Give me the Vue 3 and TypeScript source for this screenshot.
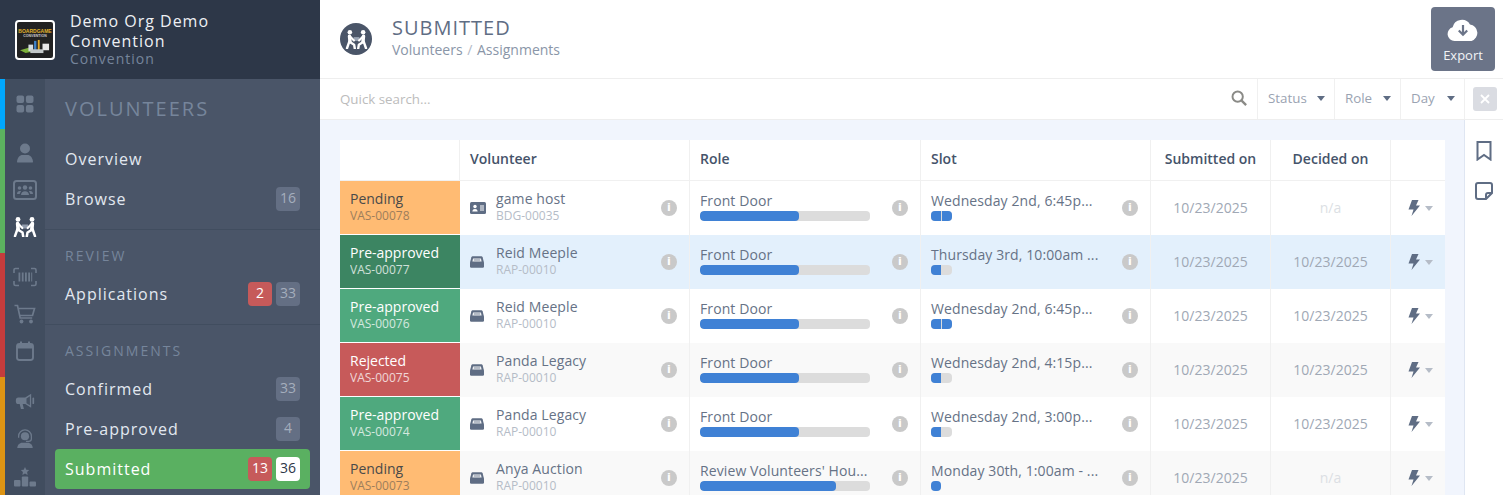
<script setup lang="ts">
type Row = {
  status: string;
  tone: string;
  code: string;
  name: string;
  sub: string;
  kind: "badge" | "inbox";
  role: string;
  rolePct: number;
  slot: string;
  slotParts: number;
  decided: string;
  highlight?: boolean;
  shaded?: boolean;
};

const rows: Row[] = [
  { status: "Pending", tone: "pending", code: "VAS-00078", name: "game host", sub: "BDG-00035", kind: "badge", role: "Front Door", rolePct: 58, slot: "Wednesday 2nd, 6:45p...", slotParts: 2, decided: "n/a" },
  { status: "Pre-approved", tone: "approved-dark", code: "VAS-00077", name: "Reid Meeple", sub: "RAP-00010", kind: "inbox", role: "Front Door", rolePct: 58, slot: "Thursday 3rd, 10:00am ...", slotParts: 1, decided: "10/23/2025", highlight: true },
  { status: "Pre-approved", tone: "approved", code: "VAS-00076", name: "Reid Meeple", sub: "RAP-00010", kind: "inbox", role: "Front Door", rolePct: 58, slot: "Wednesday 2nd, 6:45p...", slotParts: 2, decided: "10/23/2025" },
  { status: "Rejected", tone: "rejected", code: "VAS-00075", name: "Panda Legacy", sub: "RAP-00010", kind: "inbox", role: "Front Door", rolePct: 58, slot: "Wednesday 2nd, 4:15p...", slotParts: 1, decided: "10/23/2025", shaded: true },
  { status: "Pre-approved", tone: "approved", code: "VAS-00074", name: "Panda Legacy", sub: "RAP-00010", kind: "inbox", role: "Front Door", rolePct: 58, slot: "Wednesday 2nd, 3:00p...", slotParts: 1, decided: "10/23/2025" },
  { status: "Pending", tone: "pending", code: "VAS-00073", name: "Anya Auction", sub: "RAP-00010", kind: "inbox", role: "Review Volunteers' Hou...", rolePct: 80, slot: "Monday 30th, 1:00am - ...", slotParts: 0, decided: "n/a", shaded: true },
];

const filters = ["Status", "Role", "Day"];
</script>

<template>
  <div class="page">
    <aside class="sidebar">
      <div class="brand">
        <div class="logo">
          <div class="logo-inner">
            <span class="logo-top">BOARDGAME</span>
            <span class="logo-sub">CONVENTION</span>
            <svg viewBox="0 0 34 16" class="logo-art">
              <path d="M1 12l10-3 5 4-9 2z" fill="#7fb33c" />
              <rect x="10" y="6" width="5" height="7" fill="#d5dde0" />
              <rect x="16" y="2" width="2.500" height="10" fill="#3e83c9" />
              <rect x="20" y="1" width="2" height="11" fill="#e0a92c" />
              <rect x="25" y="5" width="7" height="7" fill="#e8e8e8" />
              <rect x="12" y="11" width="14" height="4" fill="#c4c9c9" />
            </svg>
          </div>
        </div>
        <div class="brand-text">
          <div class="brand-name">Demo Org Demo Convention</div>
          <div class="brand-type">Convention</div>
        </div>
      </div>

      <div class="side-body">
        <nav class="rail">
          <div class="rail-group blue">
            <svg class="ri" viewBox="0 0 20 20"><rect x="1.500" y="1.500" width="7.600" height="7.600" rx="2" /><rect x="10.900" y="1.500" width="7.600" height="7.600" rx="2" /><rect x="1.500" y="10.900" width="7.600" height="7.600" rx="2" /><rect x="10.900" y="10.900" width="7.600" height="7.600" rx="2" /></svg>
          </div>
          <div class="rail-group green">
            <svg class="ri" viewBox="0 0 20 20"><circle cx="10" cy="5.500" r="5" /><path d="M2.500 19.500c-.4 0-.5-.3-.5-.8C2.400 14.500 4.800 12 7.500 12h5c2.700 0 5.100 2.500 5.500 6.700 0 .5-.1.8-.5.8z" /></svg>
            <svg class="ri wide" viewBox="0 0 24 20"><rect x="1" y="1" width="22" height="18" rx="2.500" fill="none" stroke="#6d7a8c" stroke-width="2" /><circle cx="12" cy="7.500" r="2.200" /><circle cx="6.500" cy="8" r="1.800" /><circle cx="17.500" cy="8" r="1.800" /><path d="M8 15c0-2.200 1.800-3.700 4-3.700s4 1.500 4 3.700zM4 14c0-1.800 1.100-3 2.600-3 .6 0 1.100.1 1.500.4-.8.700-1.300 1.500-1.400 2.600zM20 14c0-1.800-1.100-3-2.600-3-.6 0-1.100.1-1.500.4.8.7 1.300 1.500 1.400 2.600z" /></svg>
            <svg class="ri wide carry" viewBox="0 0 24 20"><rect x="9" y="7.500" width="6" height="4" fill="#8f9aab" stroke="none" /><circle cx="5" cy="2.400" r="2.400" stroke="none" /><circle cx="19" cy="2.400" r="2.400" stroke="none" /><path d="M4.600 6.500 5.200 12.500" stroke-width="3.600" /><path d="M5 6.500 9.300 11" stroke-width="2.200" /><path d="M4.500 12 2 19.200M5.500 13 9.500 15.500 10.200 19.500" stroke-width="2.500" /><path d="M19.400 6.500 18.800 12.500" stroke-width="3.600" /><path d="M19 6.500 14.700 11" stroke-width="2.200" /><path d="M19.500 12 22 19.200M18.500 13 14.500 15.500 13.800 19.500" stroke-width="2.500" /></svg>
          </div>
          <div class="rail-group red">
            <svg class="ri wide" viewBox="0 0 24 20"><path d="M1 6V3a1.500 1.500 0 0 1 1.500-1.500H6M18 1.500h3.500A1.500 1.500 0 0 1 23 3v3M23 14v3a1.500 1.500 0 0 1-1.500 1.500H18M6 18.500H2.500A1.500 1.500 0 0 1 1 17v-3" fill="none" stroke="#6d7a8c" stroke-width="1.600" /><rect x="5.500" y="5.500" width="1.800" height="9" /><rect x="8.800" y="5.500" width="1.800" height="9" /><rect x="12" y="5.500" width="1.800" height="9" /><rect x="15.200" y="5.500" width="1.800" height="9" /><rect x="18.200" y="5.500" width="1" height="9" /></svg>
            <svg class="ri wide" viewBox="0 0 24 20"><path d="M1.500 1.500h3l2.700 12.500h12" fill="none" stroke="#6d7a8c" stroke-width="1.700" /><path d="M5.500 4.500h16l-2 7H7" fill="none" stroke="#6d7a8c" stroke-width="1.700" /><circle cx="8.500" cy="17.500" r="1.900" /><circle cx="18" cy="17.500" r="1.900" /></svg>
            <svg class="ri" viewBox="0 0 20 20"><rect x="2" y="3" width="16" height="16" rx="2.500" fill="none" stroke="#6d7a8c" stroke-width="1.900" /><rect x="2" y="3" width="16" height="4.500" /><rect x="5" y="0.500" width="2" height="4" /><rect x="13" y="0.500" width="2" height="4" /></svg>
          </div>
          <div class="rail-group orange">
            <svg class="ri" viewBox="0 0 23.500 20"><path d="M19 1.500 12 6H4a3 3 0 0 0-3 3v1.500a3 3 0 0 0 3 3h1.500L7 19.500h3.500l-1.500-6h3l7 4.500z" /><path d="M17.500 4.500v10.500l-4-2.500V7z" fill="#465264" /><rect x="20.500" y="6" width="2" height="7.500" rx="1" /></svg>
            <svg class="ri wide" viewBox="0 0 24 22"><circle cx="12" cy="8" r="4.500" /><path d="M5 9.500V8a7 7 0 0 1 14 0v3c0 1.500-1.200 2.500-3 2.500h-3" fill="none" stroke="#6d7a8c" stroke-width="1.400" /><path d="M3.500 21c0-3.500 2.500-6 5.500-6h6c3 0 5.500 2.500 5.500 6z" /></svg>
            <svg class="ri wide" viewBox="0 0 24 20"><path d="m12 0 1.300 2.700 2.900.4-2.100 2 .5 2.900-2.600-1.400-2.600 1.400.5-2.900-2.100-2 2.900-.4z" /><rect x="1" y="13" width="6.500" height="6.500" rx="1" /><rect x="8.800" y="9.500" width="6.400" height="10" rx="1" /><rect x="16.500" y="14.500" width="6.500" height="5" rx="1" /></svg>
          </div>
        </nav>

        <div class="menu">
          <h2 class="menu-title">VOLUNTEERS</h2>
          <section class="menu-block first">
            <a class="item">Overview</a>
            <a class="item">Browse<span class="counts"><b class="count">16</b></span></a>
          </section>
          <section class="menu-block">
            <h3 class="menu-head">REVIEW</h3>
            <a class="item">Applications<span class="counts"><b class="count red">2</b><b class="count">33</b></span></a>
          </section>
          <section class="menu-block last">
            <h3 class="menu-head">ASSIGNMENTS</h3>
            <a class="item">Confirmed<span class="counts"><b class="count">33</b></span></a>
            <a class="item">Pre-approved<span class="counts"><b class="count">4</b></span></a>
            <a class="item current">Submitted<span class="counts"><b class="count red">13</b><b class="count white">36</b></span></a>
          </section>
        </div>
      </div>
    </aside>

    <main class="main">
      <header class="top">
        <div class="round-icon">
          <svg class="carry" viewBox="0 0 24 20" width="23" height="19"><rect x="9" y="7.500" width="6" height="4" fill="#9aa5b5" stroke="none" /><circle cx="5" cy="2.400" r="2.400" stroke="none" /><circle cx="19" cy="2.400" r="2.400" stroke="none" /><path d="M4.600 6.500 5.200 12.500" stroke-width="3.600" /><path d="M5 6.500 9.300 11" stroke-width="2.200" /><path d="M4.500 12 2 19.200M5.500 13 9.500 15.500 10.200 19.500" stroke-width="2.500" /><path d="M19.400 6.500 18.800 12.500" stroke-width="3.600" /><path d="M19 6.500 14.700 11" stroke-width="2.200" /><path d="M19.500 12 22 19.200M18.500 13 14.500 15.500 13.800 19.500" stroke-width="2.500" /></svg>
        </div>
        <div class="top-text">
          <h1>SUBMITTED</h1>
          <div class="crumbs">Volunteers <i>/</i> Assignments</div>
        </div>
        <button class="export" type="button">
          <svg viewBox="0 0 32 24" width="32" height="24"><path fill="#fff" d="M7.500 23A7 7 0 0 1 5.600 9.300 9.500 9.500 0 0 1 23 6.500 8.500 8.500 0 0 1 24.500 23z" /><path d="M16 7v9M11.800 12.500 16 16.700l4.200-4.200" fill="none" stroke="#6b7488" stroke-width="2.200" /></svg>
          <span>Export</span>
        </button>
      </header>

      <div class="searchbar">
        <span class="placeholder">Quick search...</span>
        <svg class="search-icon" viewBox="0 0 18 18" width="16" height="16"><circle cx="7.500" cy="7.500" r="5.800" fill="none" stroke="#8a8a86" stroke-width="2.200" /><path d="m12 12 5 5" stroke="#8a8a86" stroke-width="2.600" /></svg>
        <div v-for="f in filters" :key="f" class="filter" :class="'f-' + f.toLowerCase()">{{ f }}<i class="caret"></i></div>
        <div class="clear-wrap">
          <span class="clear">
            <svg viewBox="0 0 10 10" width="10" height="10"><path d="m1 1 8 8M9 1 1 9" stroke="#fff" stroke-width="1.800" /></svg>
          </span>
        </div>
      </div>

      <div class="body">
        <div class="content">
          <div class="table">
            <div class="tr head">
              <div class="td"></div>
              <div class="td">Volunteer</div>
              <div class="td">Role</div>
              <div class="td">Slot</div>
              <div class="td center">Submitted on</div>
              <div class="td center">Decided on</div>
              <div class="td"></div>
            </div>
            <div v-for="r in rows" :key="r.code" class="tr row" :class="{ highlight: r.highlight, shaded: r.shaded }">
              <div class="td status" :class="r.tone">
                <div class="st-name">{{ r.status }}</div>
                <div class="st-code">{{ r.code }}</div>
              </div>
              <div class="td vol">
                <svg v-if="r.kind === 'badge'" class="kind" viewBox="0 0 16 12" width="16" height="12"><rect width="16" height="12" rx="1.500" fill="#5f6d84" /><circle cx="5" cy="4.500" r="1.700" fill="#fff" /><path d="M2.300 9.500C2.500 7.800 3.600 7 5 7s2.500.8 2.700 2.500z" fill="#fff" /><path d="M10 4h4M10 6h4M10 8h4" stroke="#fff" stroke-width="1" /></svg>
                <svg v-else class="kind inbox" viewBox="0 0 16 13" width="14" height="12"><path d="M3 0h10a1.500 1.500 0 0 1 1.400 1L16 7v4.500a1.500 1.500 0 0 1-1.500 1.500h-13A1.500 1.500 0 0 1 0 11.500V7l1.600-6A1.500 1.500 0 0 1 3 0z" fill="#5f6d84" /><path d="M3.500 2.500h9l.8 3.500H2.700z" fill="#fff" opacity=".9" /><path d="M4.500 4.200h7" stroke="#5f6d84" stroke-width=".9" /></svg>
                <div class="two name-block">
                  <div class="main-line">{{ r.name }}</div>
                  <div class="sub-line">{{ r.sub }}</div>
                </div>
                <i class="info">i</i>
              </div>
              <div class="td barcell">
                <div class="two bar-block">
                  <div class="main-line">{{ r.role }}</div>
                  <div class="bar role-bar"><span :style="{ width: r.rolePct + '%' }"></span></div>
                </div>
                <i class="info">i</i>
              </div>
              <div class="td barcell">
                <div class="two bar-block">
                  <div class="main-line">{{ r.slot }}</div>
                  <div class="bar slot-bar" :class="r.slotParts === 0 ? 'tiny' : ''">
                    <span v-for="n in Math.max(r.slotParts, 1)" :key="n" class="seg"></span>
                  </div>
                </div>
                <i class="info">i</i>
              </div>
              <div class="td center date">10/23/2025</div>
              <div class="td center date" :class="{ na: r.decided === 'n/a' }">{{ r.decided }}</div>
              <div class="td center action">
                <svg viewBox="0 0 12 16" width="12" height="16"><path d="M4 0h6.500L8 5.500h4L3.500 16l2-6.500H.5z" fill="#5f6d84" /></svg>
                <i class="caret small"></i>
              </div>
            </div>
          </div>
        </div>
        <aside class="tools">
          <svg viewBox="0 0 16 20" width="16" height="20"><path d="M1.500 1h13v17.500L8 14l-6.500 4.500z" fill="none" stroke="#5f6d84" stroke-width="2" /></svg>
          <svg viewBox="0 0 18 18" width="18" height="18"><path d="M3 1h12a2 2 0 0 1 2 2v8l-6 6H3a2 2 0 0 1-2-2V3a2 2 0 0 1 2-2z" fill="none" stroke="#5f6d84" stroke-width="2" /><path d="M11 17v-4a2 2 0 0 1 2-2h4" fill="none" stroke="#5f6d84" stroke-width="2" /></svg>
        </aside>
      </div>
    </main>
  </div>
</template>

<style>
html,
body {
  margin: 0;
  height: 495px;
  overflow: hidden;
  background: #fff;
}
</style>

<style scoped>
.page {
  display: flex;
  width: 1503px;
  height: 495px;
  overflow: hidden;
  font-family: "Open Sans", sans-serif;
  color: #5f6d84;
}

/* sidebar */
.sidebar {
  width: 320px;
  flex: none;
  display: flex;
  flex-direction: column;
  background: #4a5568;
}
.brand {
  height: 79px;
  flex: none;
  box-sizing: border-box;
  background: #2d3748;
  display: flex;
  align-items: center;
  padding-left: 15px;
  gap: 15px;
}
.logo {
  width: 40px;
  height: 40px;
  box-sizing: border-box;
  border: 2px solid #fff;
  border-radius: 4px;
  background: #222;
  overflow: hidden;
  flex: none;
}
.logo-inner {
  display: flex;
  flex-direction: column;
  align-items: center;
  padding-top: 7px;
}
.logo-top {
  font: 700 5px/5px "Liberation Sans", sans-serif;
  color: #e0b22d;
  white-space: nowrap;
}
.logo-sub {
  font: 700 3.5px/4px "Liberation Sans", sans-serif;
  color: #ccc;
  white-space: nowrap;
}
.logo-art {
  width: 32px;
  height: 15px;
  margin-top: 1px;
  flex: none;
}
.brand-text {
  width: 165px;
  letter-spacing: 1px;
  margin-top: -2px;
}
.brand-name {
  color: #edf0f4;
  font-size: 16px;
  line-height: 20px;
}
.brand-type {
  color: #76859b;
  font-size: 14px;
  line-height: 16px;
}
.side-body {
  flex: 1;
  display: flex;
  min-height: 0;
}
.rail {
  width: 45px;
  flex: none;
  background: #414d5f;
  display: flex;
  flex-direction: column;
}
.rail-group {
  border-left: 5px solid;
  display: flex;
  flex-direction: column;
  align-items: center;
  box-sizing: border-box;
}
.rail-group.blue {
  border-color: #00a8ff;
  height: 50px;
  padding-top: 15px;
}
.rail-group.green {
  border-color: #5cb25f;
  height: 124px;
  padding-top: 14px;
  gap: 17px;
}
.rail-group.red {
  border-color: #c53c3c;
  height: 124px;
  padding-top: 14px;
  gap: 17px;
}
.rail-group.orange {
  border-color: #dd9414;
  flex: 1;
  padding-top: 14px;
  gap: 18px;
}
.ri {
  width: 20px;
  height: 20px;
  fill: #6d7a8c;
  flex: none;
}
.ri.wide {
  width: 24px;
}
.carry {
  fill: #fff;
  stroke: #fff;
  stroke-linecap: round;
  stroke-linejoin: round;
}
.carry path {
  fill: none;
}
.menu {
  flex: 1;
  min-width: 0;
}
.menu-title {
  margin: 0;
  padding: 15px 0 0 20px;
  height: 45px;
  box-sizing: border-box;
  font-size: 20px;
  line-height: 30px;
  font-weight: 400;
  letter-spacing: 2px;
  color: #76859b;
}
.menu-block {
  border-bottom: 1px solid #414d5f;
  padding: 0 10px 10px;
}
.menu-block.first {
  padding-top: 15px;
}
.menu-block.last {
  border-bottom: 0;
}
.menu-head {
  margin: 0;
  padding: 16px 0 0 10px;
  height: 44px;
  box-sizing: border-box;
  font-size: 14px;
  line-height: 20px;
  font-weight: 400;
  letter-spacing: 2px;
  color: #76859b;
}
.item {
  height: 40px;
  box-sizing: border-box;
  display: flex;
  align-items: center;
  justify-content: space-between;
  padding: 0 10px;
  font-size: 16px;
  letter-spacing: 1px;
  color: #e2e8f0;
  border-radius: 4px;
}
.item.current {
  background: #5ab061;
  color: #fff;
}
.counts {
  display: flex;
  gap: 4px;
}
.count {
  width: 24px;
  height: 24px;
  border-radius: 4px;
  background: #646f84;
  color: #a4aebd;
  font-size: 14px;
  font-weight: 400;
  letter-spacing: 0;
  line-height: 22px;
  text-align: center;
}
.count.red {
  background: #c65a5a;
  color: #fff;
}
.count.white {
  background: #fff;
  color: #2d3748;
}

/* main */
.main {
  flex: 1;
  min-width: 0;
  display: flex;
  flex-direction: column;
}
.top {
  height: 79px;
  flex: none;
  box-sizing: border-box;
  border-bottom: 1px solid #eeeeee;
  display: flex;
  align-items: center;
  padding: 0 8px 3px 20px;
}
.round-icon {
  width: 32px;
  height: 32px;
  border-radius: 50%;
  background: #4a5568;
  display: flex;
  align-items: center;
  justify-content: center;
  margin-right: 20px;
  margin-top: 3px;
}
.top-text {
  flex: 1;
}
.top-text h1 {
  margin: 0;
  font-size: 20px;
  line-height: 24px;
  font-weight: 400;
  letter-spacing: 1px;
  color: #5f6d84;
}
.crumbs {
  font-size: 14px;
  line-height: 20px;
  color: #8a96a8;
}
.crumbs i {
  font-style: normal;
  color: #b3bac6;
  margin: 0 1px;
}
.export {
  align-self: flex-start;
  width: 64px;
  height: 64px;
  padding: 11px 0 0;
  margin-top: 7px;
  border: 0;
  border-radius: 4px;
  background: #6b7488;
  color: #f1f3f6;
  font-family: inherit;
  font-size: 13px;
  line-height: 18px;
  display: flex;
  flex-direction: column;
  align-items: center;
  gap: 4px;
}
.searchbar {
  height: 41px;
  flex: none;
  box-sizing: border-box;
  border-bottom: 1px solid #eeeeee;
  display: flex;
  align-items: center;
  font-size: 13.33px;
}
.placeholder {
  flex: 1;
  padding: 0 0 1px 20px;
  color: #bcbcbc;
}
.search-icon {
  margin: 0 10px 2px 0;
}
.filter {
  height: 40px;
  box-sizing: border-box;
  border-left: 1px solid #f0f0f0;
  display: flex;
  align-items: center;
  padding: 0 0 2px 10px;
  color: #9aa3b2;
}
.f-status {
  width: 77px;
}
.f-role {
  width: 66px;
}
.f-day {
  width: 64px;
}
.caret {
  display: block;
  width: 0;
  height: 0;
  border-left: 4.5px solid transparent;
  border-right: 4.5px solid transparent;
  border-top: 5px solid #5f6d84;
  margin-left: auto;
  margin-right: 9px;
}
.clear-wrap {
  width: 39px;
  height: 40px;
  box-sizing: border-box;
  border-left: 1px solid #f0f0f0;
  display: flex;
  align-items: center;
  padding-left: 8px;
}
.clear {
  width: 24px;
  height: 24px;
  border-radius: 3px;
  background: #dadce2;
  display: flex;
  align-items: center;
  justify-content: center;
}
.body {
  flex: 1;
  min-height: 0;
  display: flex;
}
.content {
  width: 1144px;
  flex: none;
  box-sizing: border-box;
  background: #f1f5fd;
  padding: 20px 19px 0 20px;
  overflow: hidden;
}
.tools {
  flex: 1;
  border-left: 1px solid #dfe6f2;
  display: flex;
  flex-direction: column;
  align-items: center;
  gap: 21px;
  padding-top: 21px;
}

/* table */
.table {
  width: 1105px;
  background: #fff;
}
.tr {
  display: grid;
  grid-template-columns: 120px 230px 231px 230px 120px 120px 54px;
}
.td {
  box-sizing: border-box;
  border-right: 1px solid #f0f0f0;
  display: flex;
  align-items: center;
  min-width: 0;
  font-size: 14px;
}
.td:last-child {
  border-right: 0;
}
.head {
  height: 41px;
  box-sizing: border-box;
  border-bottom: 1px solid #f0f0f0;
}
.head .td {
  padding: 0 10px 3px;
  color: #45536a;
  font-weight: 600;
}
.td.center {
  justify-content: center;
}
.row {
  height: 54px;
}
.row.highlight {
  background: #e3f0fc;
}
.row.shaded {
  background: #f9f9f9;
}
.status {
  display: block;
  padding: 9px 10px 0;
  border-right: 0;
  border-bottom: 1px solid #fff;
  line-height: 18px;
}
.st-name {
  font-size: 14px;
}
.st-code {
  font-size: 12px;
  line-height: 16px;
  opacity: 0.75;
}
.status.pending {
  background: #ffbb73;
  color: #4a4a4a;
}
.status.pending .st-code {
  color: #7c6a55;
}
.status.approved-dark {
  background: #3c8562;
  color: #fff;
}
.status.approved {
  background: #4fa97e;
  color: #fff;
}
.status.rejected {
  background: #c75a5a;
  color: #fff;
}
.vol {
  padding-left: 10px;
}
.kind {
  flex: none;
  margin-right: 10px;
}
.kind.inbox {
  margin-right: 12px;
}
.two {
  min-width: 0;
}
.name-block {
  flex: 1;
  padding-bottom: 4px;
}
.bar-block {
  flex: none;
  width: 170px;
  padding-bottom: 4px;
}
.main-line {
  line-height: 20px;
  color: #667286;
  letter-spacing: 0.1px;
  white-space: nowrap;
}
.sub-line {
  font-size: 12px;
  line-height: 14px;
  color: #b5bcc7;
}
.info {
  flex: none;
  width: 16px;
  height: 16px;
  margin: 0 12px 0 auto;
  border-radius: 50%;
  background: #c9c9c9;
  color: #fff;
  font: 700 11px/16px "DejaVu Sans", sans-serif;
  text-align: center;
}
.barcell {
  padding-left: 10px;
}
.bar {
  display: flex;
  height: 10px;
  border-radius: 4px;
  background: #dcdcdc;
  overflow: hidden;
}
.role-bar {
  width: 170px;
}
.role-bar span {
  background: #3f81d5;
  border-radius: 4px;
}
.slot-bar {
  width: 21px;
  gap: 1px;
}
.slot-bar.tiny {
  width: 10px;
}
.seg {
  width: 10px;
  background: #3f81d5;
}
.date {
  color: #a0a8b5;
  padding-bottom: 1px;
}
.date.na {
  color: #dcdfe4;
}
.action {
  gap: 5px;
  padding-left: 4px;
}
.caret.small {
  margin: 0;
  border-left-width: 4px;
  border-right-width: 4px;
  border-top-color: #b5bcc7;
}
</style>
